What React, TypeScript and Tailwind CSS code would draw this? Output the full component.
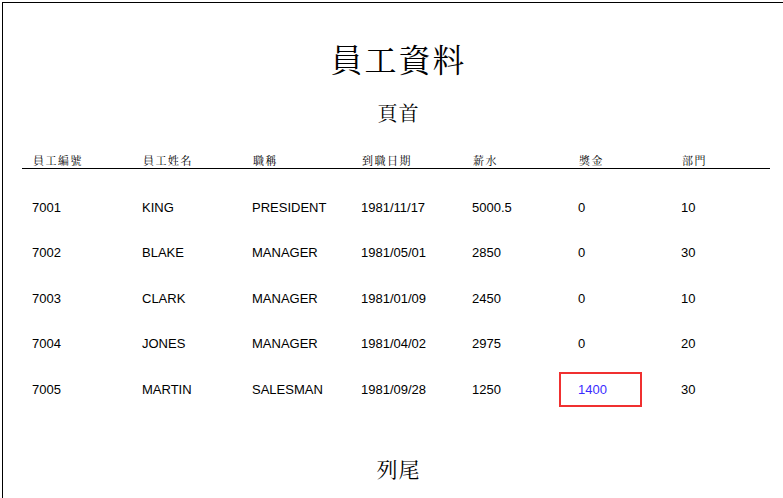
import React from "react";

const rows = [
  ["7001", "KING", "PRESIDENT", "1981/11/17", "5000.5", "0", "10"],
  ["7002", "BLAKE", "MANAGER", "1981/05/01", "2850", "0", "30"],
  ["7003", "CLARK", "MANAGER", "1981/01/09", "2450", "0", "10"],
  ["7004", "JONES", "MANAGER", "1981/04/02", "2975", "0", "20"],
  ["7005", "MARTIN", "SALESMAN", "1981/09/28", "1250", "1400", "30"],
];

const headers = ["員工編號", "員工姓名", "職稱", "到職日期", "薪水", "獎金", "部門"];
const widths = ["w-[110px]", "w-[110px]", "w-[109px]", "w-[111px]", "w-[106px]", "w-[103px]", "flex-1"];

const cjk = { fontFamily: '"Noto Serif CJK TC", "Noto Sans CJK TC", serif' };

export default function App() {
  return (
    <div className="w-[783px] h-[498px] overflow-hidden bg-white">
      <div className="ml-[2px] mt-[2px] w-[792px] h-[600px] border-l border-t border-black">
        <div
          className="pt-[35px] h-[75px] text-center text-[32px] leading-[40px] tracking-[2px] text-black"
          style={cjk}
        >
          員工資料
        </div>
        <div className="mt-[21px] text-center text-[20px] leading-[28px] tracking-[1px] text-black" style={cjk}>
          頁首
        </div>
        <div className="ml-[19px] w-[748px] mt-[24px]">
          <div className="flex h-[18px] items-center border-b border-black">
            {headers.map((h, i) => (
              <div
                key={i}
                className={`${widths[i]} pl-[11px] text-[11px] leading-[14px] tracking-[1.5px] text-black`}
                style={cjk}
              >
                {h}
              </div>
            ))}
          </div>
          <div className="pt-[16px]" style={{ fontFamily: '"Liberation Sans", Arial, sans-serif' }}>
            {rows.map((r, ri) => (
              <div key={ri} className="flex h-[45.5px] items-center">
                {r.map((c, ci) => {
                  const hl = ri === 4 && ci === 5;
                  return (
                    <div key={ci} className={`${widths[ci]} relative pl-[10px] text-[13px] leading-[16px] text-black`}>
                      {hl ? (
                        <>
                          <div className="absolute left-[-9px] top-[-10px] w-[83px] h-[35px] border-2 border-[#f03030]" />
                          <span className="text-[#3a2cff]">{c}</span>
                        </>
                      ) : (
                        c
                      )}
                    </div>
                  );
                })}
              </div>
            ))}
          </div>
        </div>
        <div className="mt-[41px] text-center text-[21px] leading-[28px] tracking-[1px] text-black" style={cjk}>
          列尾
        </div>
      </div>
    </div>
  );
}
